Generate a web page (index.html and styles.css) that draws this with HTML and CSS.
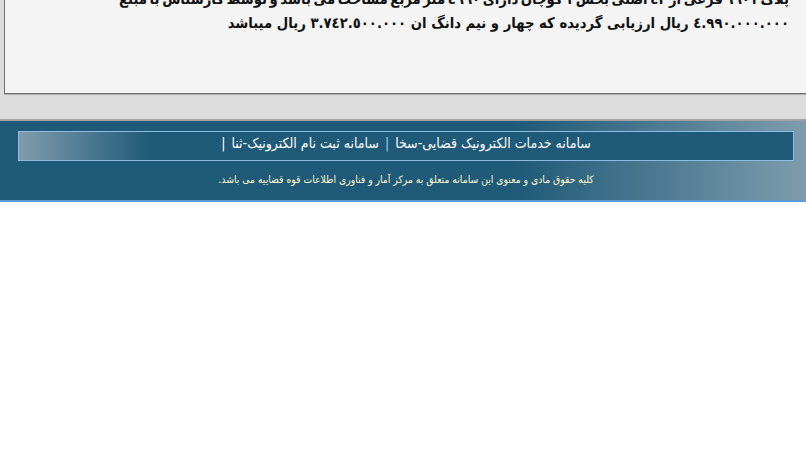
FILE: index.html
```html
<!DOCTYPE html>
<html lang="fa" dir="rtl">
<head>
<meta charset="utf-8">
<title>سامانه</title>
<link rel="stylesheet" href="styles.css">
</head>
<body>
<div class="outer">
  <div class="box">
    <p class="desc"><span class="line first">پلاک ٦٩٠١ فرعی از ٤٢ اصلی بخش ١ کوچان دارای ٤٩٩٠ متر مربع مساحت می باشد و توسط کارشناس با مبلغ</span><span class="line">٤.٩٩٠.٠٠٠.٠٠٠ ریال ارزیابی گردیده که چهار و نیم دانگ ان ٣.٧٤٢.٥٠٠.٠٠٠ ریال میباشد</span></p>
  </div>
</div>
<div class="footer">
  <div class="links">
    <span class="link">سامانه خدمات الکترونیک قضایی-سخا</span>
    <span class="sep">|</span>
    <span class="link">سامانه ثبت نام الکترونیک-ثنا</span>
    <span class="sep2">|</span>
  </div>
  <div class="copy">کلیه حقوق مادی و معنوی این سامانه متعلق به مرکز آمار و فناوری اطلاعات قوه قضاییه می باشد.</div>
</div>
</body>
</html>
```
FILE: styles.css
```css
html, body {
  margin: 0;
  padding: 0;
  background: #ffffff;
}
body {
  font-family: "DejaVu Sans", "Noto Sans", sans-serif;
  margin-top: -37px;
}
.outer {
  background: #dcdcdc;
  padding: 0 0 25px 4px;
  border-bottom: 2px solid #a3a3a3;
  overflow: hidden;
}
.box {
  background: #f4f4f4;
  border: 1px solid #6e6e6e;
  border-top: none;
  border-right: none;
  box-shadow: 0 1px 0 #b0b0b0;
  height: 131px;
  padding: 24px 17px 0 0;
  box-sizing: border-box;
}
.desc {
  margin: 0;
  font-family: "DejaVu Sans Condensed", "DejaVu Sans", sans-serif;
  font-stretch: condensed;
  font-weight: bold;
  font-size: 14.7px;
  line-height: 24px;
  color: #111;
  text-align: right;
  white-space: nowrap;
}
.line {
  display: block;
}
.first {
  word-spacing: -2px;
}
.footer {
  background: linear-gradient(to right, #1f5a78 0%, #1f5a78 64%, #7d9cad 100%);
  border-bottom: 2px solid #5b9bd5;
  padding: 10px 12px 0 18px;
  height: 69px;
}
.links {
  background: linear-gradient(to right, #809bac 0%, #1f5a78 17%, #1f5a78 100%);
  border: 1px solid #8cbde0;
  height: 28px;
  display: flex;
  justify-content: center;
  align-items: flex-start;
  gap: 6px;
  color: #ffffff;
  font-family: "DejaVu Sans Condensed", "DejaVu Sans", sans-serif;
  font-stretch: condensed;
  font-size: 14px;
  line-height: 22px;
}
.sep {
  color: #8fd6f5;
}
.sep2 {
  color: #ffffff;
}
.copy {
  text-align: center;
  color: #fffbd0;
  font-family: "DejaVu Sans Condensed", "DejaVu Sans", sans-serif;
  font-stretch: condensed;
  font-size: 10.3px;
  line-height: 14px;
  margin-top: 11px;
}
```
